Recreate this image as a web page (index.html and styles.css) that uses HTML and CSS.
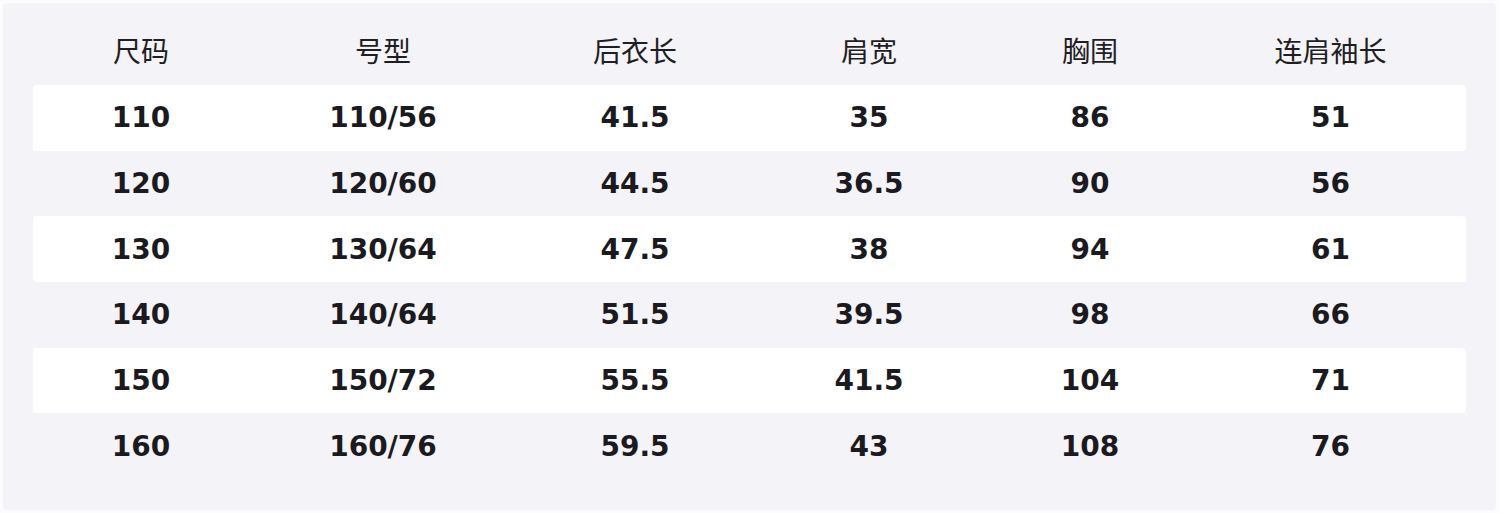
FILE: index.html
```html
<!DOCTYPE html>
<html lang="zh">
<head>
<meta charset="utf-8">
<link rel="stylesheet" href="styles.css">
</head>
<body>
<div class="page">
  <div class="sheet">
    <div class="row head">
      <div>尺码</div><div>号型</div><div>后衣长</div><div>肩宽</div><div>胸围</div><div>连肩袖长</div>
    </div>
    <div class="row odd"><div>110</div><div>110/56</div><div>41.5</div><div>35</div><div>86</div><div>51</div></div>
    <div class="row"><div>120</div><div>120/60</div><div>44.5</div><div>36.5</div><div>90</div><div>56</div></div>
    <div class="row odd"><div>130</div><div>130/64</div><div>47.5</div><div>38</div><div>94</div><div>61</div></div>
    <div class="row"><div>140</div><div>140/64</div><div>51.5</div><div>39.5</div><div>98</div><div>66</div></div>
    <div class="row odd"><div>150</div><div>150/72</div><div>55.5</div><div>41.5</div><div>104</div><div>71</div></div>
    <div class="row"><div>160</div><div>160/76</div><div>59.5</div><div>43</div><div>108</div><div>76</div></div>
  </div>
</div>
</body>
</html>
```

FILE: styles.css
```css
html, body {
  margin: 0;
  background: #fcfcfd;
}
.page {
  padding: 3px 4px 3px 3px;
  height: 513px;
  box-sizing: border-box;
}
.sheet {
  background: #f4f3f8;
  border-radius: 4px;
  height: 507px;
  box-sizing: border-box;
  padding: 16.3px 30px 0 30px;
}
.row {
  display: grid;
  grid-template-columns: 216px 268px 236px 232px 210px 1fr;
  height: 65.7px;
  align-items: center;
  text-align: center;
  font-family: "DejaVu Sans", sans-serif;
  font-weight: bold;
  font-size: 28px;
  color: #1b1a1f;
  border-radius: 3px;
}
.row.odd {
  background: #ffffff;
}
.row.head {
  font-family: "Noto Sans CJK SC", sans-serif;
  font-weight: normal;
  font-size: 28px;
  color: #1f1e23;
  padding-bottom: 4px;
  box-sizing: border-box;
}
```
